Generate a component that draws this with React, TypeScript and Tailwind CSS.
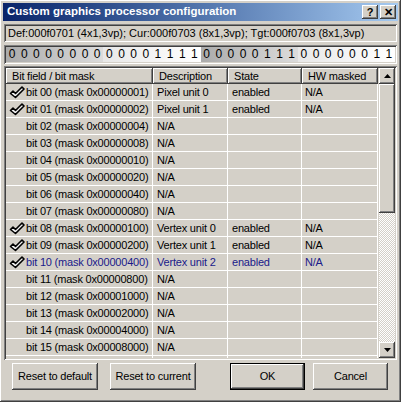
import React from 'react';

const FONT = { fontFamily: '"Liberation Sans", Arial, sans-serif' };

const raised =
  'shadow-[inset_-1px_-1px_0_#404040,inset_1px_1px_0_#ffffff,inset_-2px_-2px_0_#808080]';
const sunken =
  'shadow-[inset_1px_1px_0_#808080,inset_-1px_-1px_0_#ffffff,inset_2px_2px_0_#404040,inset_-2px_-2px_0_#d4d0c8]';

interface Row {
  bit: number;
  desc: string;
  state: string;
  hw: string;
  checked: boolean;
}

const descs: Record<number, string> = {
  0: 'Pixel unit 0',
  1: 'Pixel unit 1',
  8: 'Vertex unit 0',
  9: 'Vertex unit 1',
  10: 'Vertex unit 2',
};

const rows: Row[] = Array.from({ length: 16 }, (_, i) => ({
  bit: i,
  desc: descs[i] ?? 'N/A',
  state: descs[i] ? 'enabled' : '',
  hw: descs[i] ? 'N/A' : '',
  checked: !!descs[i],
}));

const bits = (0x000f0703 >>> 0).toString(2).padStart(32, '0').split('');

function Check() {
  return (
    <svg width="16" height="13" viewBox="0 0 16 13" className="shrink-0">
      <path
        d="M1.5 7.5 L4 5 L6.5 7.5 L13 1 L15 3 L6.5 11.5 Z"
        fill="#f0f0f0"
        stroke="#000"
        strokeWidth="1.6"
        strokeLinejoin="round"
      />
    </svg>
  );
}

function Arrow({ up }: { up?: boolean }) {
  return (
    <svg width="7" height="4" viewBox="0 0 7 4">
      <path d={up ? 'M0 4 L3.5 0 L7 4 Z' : 'M0 0 L3.5 4 L7 0 Z'} fill="#000" />
    </svg>
  );
}

function pad2(n: number) {
  return n.toString().padStart(2, '0');
}

function mask(n: number) {
  return '0x' + ((1 << n) >>> 0).toString(16).toUpperCase().padStart(8, '0');
}

export default function App() {
  return (
    <div
      className={`w-[401px] h-[402px] bg-[#d4d0c8] ${raised} p-[3px] flex flex-col text-[11px] tracking-[-0.2px] text-black overflow-hidden`}
      style={FONT}
    >
      {/* title bar */}
      <div className="h-[18px] bg-linear-to-r from-[#0a246a] to-[#a6caf0] flex items-center pl-[4px] pr-[2px]">
        <span className="text-white font-bold text-[11.5px] tracking-normal leading-none">
          Custom graphics processor configuration
        </span>
        <div className="ml-auto flex gap-[2px]">
          <div className={`w-[16px] h-[14px] bg-[#d4d0c8] ${raised} flex items-center justify-center font-bold text-[11px] leading-none`}>
            ?
          </div>
          <div className={`w-[16px] h-[14px] bg-[#d4d0c8] ${raised} flex items-center justify-center font-bold text-[11px] leading-none`}>
            ✕
          </div>
        </div>
      </div>

      {/* info line */}
      <div className={`mt-[3px] mx-[1px] h-[18px] ${sunken} flex items-center pl-[4px] whitespace-nowrap tracking-normal`}>
        Def:000f0701 (4x1,3vp); Cur:000f0703 (8x1,3vp); Tgt:000f0703 (8x1,3vp)
      </div>

      {/* bit bar */}
      <div className={`mt-[3px] mx-[1px] h-[19px] ${sunken} p-[2px] flex`}>
        {[0, 1, 2, 3].map((seg) => (
          <div
            key={seg}
            className={`flex-1 flex bg-linear-to-r ${
              seg % 2 === 0 ? 'from-[#ababab] to-[#dcdcdc]' : 'from-[#e8e8e8] to-[#ffffff]'
            }`}
          >
            {bits.slice(seg * 8, seg * 8 + 8).map((b, i) => (
              <span key={i} className="flex-1 text-center text-[12px] tracking-normal leading-[15px]">
                {b}
              </span>
            ))}
          </div>
        ))}
      </div>

      {/* list */}
      <div className={`mt-[2px] mx-[1px] h-[294px] ${sunken} p-[2px] flex`}>
        <div className="flex-1 flex flex-col overflow-hidden">
          <div className="flex h-[16px] shrink-0">
            {[
              ['Bit field / bit mask', 'w-[147px]'],
              ['Description', 'w-[75px]'],
              ['State', 'w-[74px]'],
              ['HW masked', 'w-[76px]'],
            ].map(([label, w]) => (
              <div key={label} className={`${w} ${raised} bg-[#d4d0c8] pl-[6px] flex items-center leading-none`}>
                {label}
              </div>
            ))}
          </div>
          <div className="flex-1 overflow-hidden">
            {rows.map((r) => (
              <div
                key={r.bit}
                className={`flex h-[17px] border-b border-white bg-[#d4d0c8] ${
                  r.bit === 10 ? 'text-[#1a1a8a]' : ''
                }`}
              >
                <div className="w-[147px] border-r border-white flex items-center pl-[3px] gap-[1px] whitespace-nowrap">
                  <span className="w-[16px] flex">{r.checked && <Check />}</span>
                  bit {pad2(r.bit)} (mask {mask(r.bit)})
                </div>
                <div className="w-[75px] border-r border-white flex items-center pl-[4px] whitespace-nowrap">
                  {r.desc}
                </div>
                <div className="w-[74px] border-r border-white flex items-center pl-[4px]">
                  {r.state}
                </div>
                <div className="w-[76px] border-r border-white flex items-center pl-[3px]">
                  {r.hw}
                </div>
              </div>
            ))}
            <div className="flex h-[17px]">
              <div className="w-[147px] border-r border-white" />
              <div className="w-[75px] border-r border-white" />
              <div className="w-[74px] border-r border-white" />
              <div className="w-[76px] border-r border-white" />
            </div>
          </div>
        </div>
        {/* scrollbar */}
        <div className="w-[16px] ml-[1px] flex flex-col bg-[repeating-conic-gradient(#ffffff_0_25%,#d4d0c8_0_50%)] bg-[length:2px_2px]">
          <div className={`h-[16px] bg-[#d4d0c8] ${raised} flex items-center justify-center`}>
            <Arrow up />
          </div>
          <div className={`h-[129px] bg-[#d4d0c8] ${raised}`} />
          <div className="flex-1" />
          <div className={`h-[16px] bg-[#d4d0c8] ${raised} flex items-center justify-center`}>
            <Arrow />
          </div>
        </div>
      </div>

      {/* buttons */}
      <div className="flex mt-[3px] pl-[9px] h-[27px]">
        <div className={`w-[86px] bg-[#d4d0c8] ${raised} flex items-center justify-center`}>
          Reset to default
        </div>
        <div className={`w-[86px] ml-[12px] bg-[#d4d0c8] ${raised} flex items-center justify-center`}>
          Reset to current
        </div>
        <div className="w-[75px] ml-[34px] bg-[#d4d0c8] border border-black shadow-[inset_-1px_-1px_0_#404040,inset_1px_1px_0_#ffffff,inset_-2px_-2px_0_#808080] flex items-center justify-center">
          OK
        </div>
        <div className={`w-[75px] ml-[8px] bg-[#d4d0c8] ${raised} flex items-center justify-center`}>
          Cancel
        </div>
      </div>
    </div>
  );
}
